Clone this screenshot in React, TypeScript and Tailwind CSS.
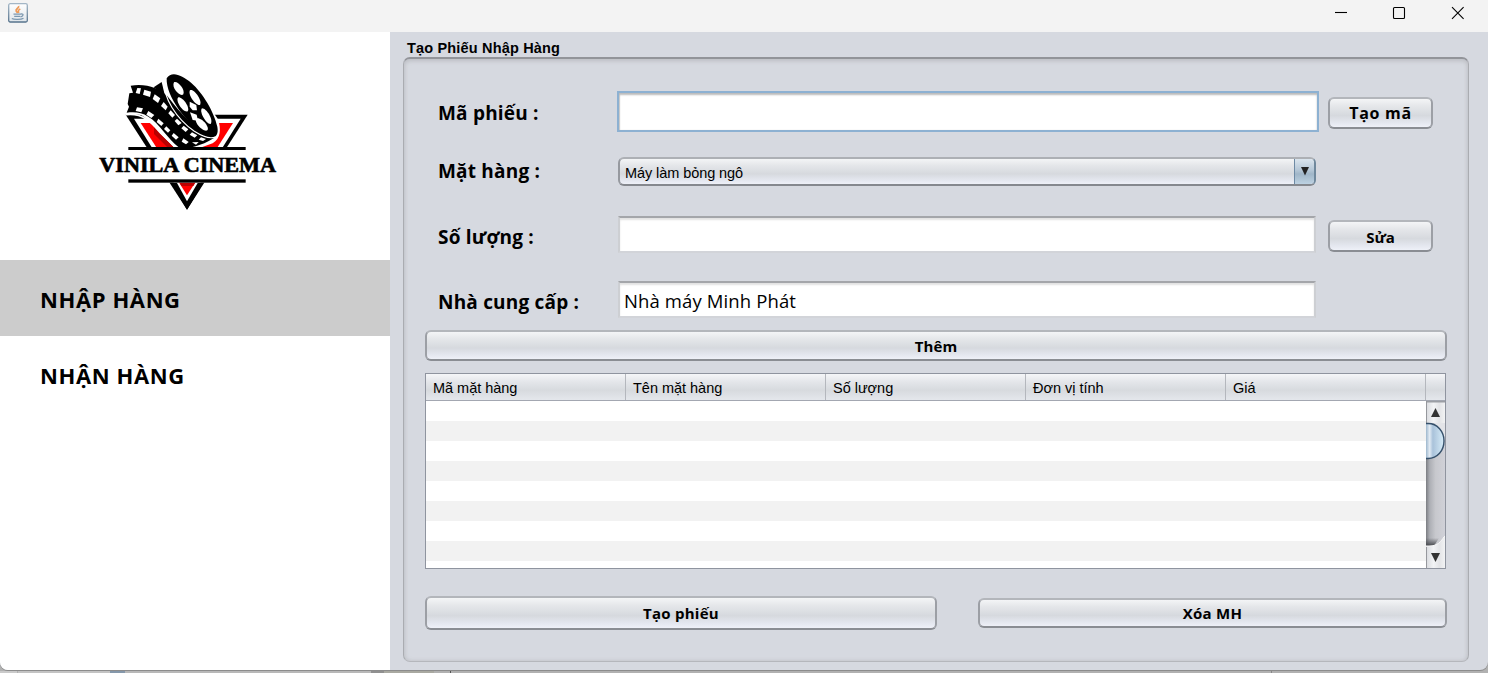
import React from "react";

const SANS = "font-['Open_Sans','Noto_Sans',sans-serif]";
const ARIAL = "font-['Liberation_Sans',Arial,sans-serif]";

function Logo() {
  return (
    <svg viewBox="0 0 660 480" className="ml-[80px] h-[160px] w-[220px]">
      <path d="M137 164H503L321 449Z" fill="#000" />
      <path d="M162 176H482L321 432Z" fill="#fff" />
      <path d="M182 189H459L321 405Z" fill="#f00" />
      <path d="M222 200L290 262H262L222 222Z" fill="#b80000" />
      <rect x="130" y="262" width="390" height="106" fill="#fff" />
      <path d="M274 369H370L321 449Z" fill="#000" />
      <path d="M291 369H353L321 424Z" fill="#fff" />
      <path d="M298 369H345L321 406Z" fill="#f00" />
      <path d="M300 369H345L340 378H304Z" fill="#b00" />
      <path d="M138 155C190 155 212 185 245 224L282 262H365L398 250C422 236 424 208 414 178L360 100L262 80L150 70Z" fill="#fff" />
      <path d="M152 77C200 70 235 84 262 108C300 158 345 210 402 234L385 244C370 252 350 258 335 262L296 262C262 235 238 190 205 170C184 156 163 156 140 158L147 140L143 132L148 100L159 98Z" fill="#000" />
      <path d="M221 82L245 66L255 108Z" fill="#000" />
      <path d="M260 55C275 32 305 45 334 69C368 98 403 157 412 200C418 232 398 242 370 223C324 192 257 111 260 55Z" fill="#000" />
      <path d="M253 67C250 112 287 174 343 214C370 231 391 239 407 230" fill="none" stroke="#fff" strokeWidth="3.5" />
      <g fill="#fff">
        <path d="M282 67C293 62 316 88 310 103C300 112 273 83 282 67Z" />
        <path d="M330 91C342 85 368 122 360 135C348 139 322 104 330 91Z" />
        <path d="M295 112C310 112 331 144 323 154C310 160 284 122 295 112Z" />
        <path d="M329 125L349 135L351 151L338 151L329 140Z" />
        <path d="M366 145C380 145 401 180 392 192C380 195 356 155 366 145Z" />
        <path d="M330 157L350 164L354 182L338 180Z" />
        <path d="M350 175C367 172 390 203 382 211C369 218 338 184 350 175Z" />
      </g>
      <g fill="#fff">
        <path d="M172 84L183 85L179 102L167 99Z" />
        <path d="M193 89L213 95L210 111L189 104Z" />
        <path d="M224 103L241 115L234 129L218 117Z" />
        <path d="M251 126L263 140L257 151L243 138Z" />
        <path d="M272 151L285 165L277 173L265 160Z" />
        <path d="M291 176L305 189L295 196L284 183Z" />
        <path d="M311 197L325 208L317 216L304 205Z" />
        <path d="M336 217L352 226L344 233L329 224Z" />
        <path d="M363 232L378 237L369 243L356 239Z" />
        <path d="M171 142L189 145L184 157L167 153Z" />
        <path d="M205 153L223 165L214 174L199 164Z" />
        <path d="M235 176L251 190L244 198L230 186Z" />
        <path d="M259 199L271 211L264 218L252 207Z" />
        <path d="M281 219L296 232L288 239L275 227Z" />
        <path d="M310 235L326 246L318 253L305 245Z" />
        <path d="M336 247L356 246L348 254Z" />
      </g>
      <path d="M138 164C190 158 215 188 240 217L288 264" fill="none" stroke="#fff" strokeWidth="5" />
      <rect x="145" y="261" width="352" height="9" />
      <rect x="145" y="358" width="352" height="10" />
      <text
        x="58"
        y="336"
        textLength="530"
        lengthAdjust="spacingAndGlyphs"
        className="font-['Liberation_Serif',serif] text-[65px] font-bold"
        stroke="#000"
        strokeWidth="2"
      >
        VINILA CINEMA
      </text>
    </svg>
  );
}

function JavaIcon() {
  return (
    <svg viewBox="0 0 20 20" className="h-5 w-5">
      <defs>
        <linearGradient id="jb" x1="0" y1="0" x2="0" y2="1">
          <stop offset="0" stopColor="#a3b6c6" />
          <stop offset="1" stopColor="#56738c" />
        </linearGradient>
        <linearGradient id="jf" x1="0" y1="0" x2="0" y2="1">
          <stop offset="0" stopColor="#ffffff" />
          <stop offset="1" stopColor="#dfe5ea" />
        </linearGradient>
      </defs>
      <rect x="0.7" y="0.7" width="18.6" height="18.3" rx="1.5" fill="url(#jf)" stroke="url(#jb)" strokeWidth="1.3" />
      <path d="M10.5 3C11.500 5 7.200 6 8.200 8L9.700 10M12.300 6C9.700 7.200 10 8 10.800 9.800" fill="none" stroke="#ee9a58" strokeWidth="1.8" />
      <path d="M5.5 11.2H13.2M6.2 13.3H12.2M13 11C16.5 10.5 15 13.5 12.5 13.8M3.8 15.5C6 16.8 13 16.7 15.5 15.2" fill="none" stroke="#7c98b0" strokeWidth="1.3" />
    </svg>
  );
}

function NimbusButton({
  children,
  className,
  font = "text-[15px] tracking-[0.25px]",
}: {
  children: React.ReactNode;
  className: string;
  font?: string;
}) {
  return (
    <button
      className={`${SANS} ${font} flex items-center justify-center rounded-[6px] border-2 border-t-[#b3b6bb] border-r-[#9c9fa5] border-b-[#8a8d93] border-l-[#9c9fa5] bg-[linear-gradient(180deg,#f8f9fa_0%,#e5e7ea_28%,#d6d9de_58%,#e4e7ef_80%,#f3f5fc_100%)] bg-origin-border font-bold text-black ${className}`}
    >
      {children}
    </button>
  );
}

function Label({ children, className }: { children: React.ReactNode; className: string }) {
  return (
    <label
      className={`${SANS} shrink-0 whitespace-nowrap text-[19px] font-bold leading-6 tracking-[0.2px] ${className}`}
    >
      {children}
    </label>
  );
}

function Field({ value }: { value: string }) {
  return (
    <div
      className={`${SANS} flex h-[37px] w-[698px] items-center border-2 border-t-[#a4a6aa] border-r-[#cdcfd3] border-b-[#d2d4d9] border-l-[#cdcfd3] bg-white pt-[3px] pl-1 text-[18.5px] tracking-[0.12px] shadow-[inset_0_2px_2px_#e2e2e2]`}
    >
      {value}
    </div>
  );
}

const columns = ["Mã mặt hàng", "Tên mặt hàng", "Số lượng", "Đơn vị tính", "Giá"];

function Table() {
  return (
    <div className="mt-3 flex h-[196px] w-[1021px] flex-col border border-[#8f949f] bg-white">
      <div
        className={`${ARIAL} flex h-[27px] shrink-0 border-b border-[#a3a7b1] bg-[linear-gradient(180deg,#f5f6f8_0%,#e4e6ea_30%,#d7dade_62%,#e4e7ec_100%)] text-[14.5px] tracking-[-0.02px] text-black`}
      >
        {columns.map((c) => (
          <div key={c} className="flex w-[200px] items-center border-r border-[#b4b7bd] pt-[3px] pl-[7px]">
            {c}
          </div>
        ))}
      </div>
      <div className="flex min-h-0 grow">
        <div className="w-[1000px] bg-[repeating-linear-gradient(180deg,#fff_0px,#fff_20px,#f2f2f2_20px,#f2f2f2_40px)]" />
        <svg viewBox="0 0 19 167" className="h-[167px] w-[19px]">
          <defs>
            <linearGradient id="track">
              <stop offset="0" stopColor="#7b7d82" />
              <stop offset="0.2" stopColor="#adafb5" />
              <stop offset="0.5" stopColor="#c7c8cd" />
              <stop offset="1" stopColor="#d0d1d8" />
            </linearGradient>
            <linearGradient id="cap">
              <stop offset="0" stopColor="#d8dade" />
              <stop offset="0.4" stopColor="#f2f3f5" />
              <stop offset="0.7" stopColor="#e3e4e7" />
              <stop offset="1" stopColor="#f2f3f4" />
            </linearGradient>
            <linearGradient id="thumb">
              <stop offset="0" stopColor="#9db7cd" />
              <stop offset="0.2" stopColor="#e2ebf4" />
              <stop offset="0.38" stopColor="#a9c2da" />
              <stop offset="1" stopColor="#d8edf9" />
            </linearGradient>
            <linearGradient id="trackEnd" x1="0" y1="0" x2="0" y2="1">
              <stop offset="0" stopColor="#45474c" stopOpacity="0" />
              <stop offset="1" stopColor="#45474c" />
            </linearGradient>
          </defs>
          <rect width="19" height="167" fill="url(#track)" />
          <path d="M0 137H13L8 145H0Z" fill="url(#trackEnd)" />
          <path d="M0 0H19V22H0Z" fill="url(#cap)" />
          <path d="M8 22H19V36Z" fill="#e3e4e8" />
          <rect width="19" height="1.5" fill="#9b9ea4" />
          <path d="M19 135C16 137 15 145 3 145H0V167H19Z" fill="url(#cap)" />
          <path d="M19 135C16 137 15 145 3 145H0" fill="none" stroke="#f6f6f7" />
          <path d="M0.5 0V22M0.5 146V167" stroke="#96989d" />
          <path d="M0 22.500H2C11.500 22.500 18 30.500 18 40C18 49.500 11.500 57.500 2 57.500H0Z" fill="url(#thumb)" />
          <path d="M0 22.500H2C11.500 22.500 18 30.500 18 40C18 49.500 11.500 57.500 2 57.500H0" fill="none" stroke="#35506b" strokeWidth="1.4" />
          <path d="M5 16L9.5 7L14 16Z" fill="#333" />
          <path d="M5 152L9.5 161L14 152Z" fill="#333" />
        </svg>
      </div>
    </div>
  );
}

export default function App() {
  return (
    <div className="flex h-[673px] w-[1488px] flex-col overflow-hidden bg-[#b1b1b1] text-black">
      <div className="flex h-[670px] flex-col overflow-hidden rounded-b-lg bg-[#d6d9e0] shadow-[0_1px_0_#8c8c8c]">
        <header className="flex h-8 shrink-0 items-start justify-between bg-[#f3f3f3] pt-[3px] pl-2">
          <JavaIcon />
          <svg viewBox="0 0 160 22" className="h-[22px] w-[160px]" fill="none" stroke="#000" strokeWidth="1.1">
            <path d="M7 9.500H19" />
            <rect x="65.500" y="4.500" width="11" height="11" rx="1" />
            <path d="M124 4.200L135.600 15.800M135.600 4.200L124 15.800" />
          </svg>
        </header>
        <div className="flex min-h-0 grow">
          <aside className={`${SANS} w-[390px] shrink-0 bg-white`}>
            <div className="h-[228px] pt-[28px]">
              <Logo />
            </div>
            <div className="flex h-[76px] items-center bg-[#ccc] pt-[2px] pl-10 text-[22px] font-bold tracking-[0.6px]">NHẬP HÀNG</div>
            <div className="flex h-[76px] items-center pt-[2px] pl-10 text-[22px] font-bold tracking-[0.6px]">NHẬN HÀNG</div>
          </aside>
          <main className="flex grow flex-col pl-[13px]">
            <h1 className={`${ARIAL} h-[25px] shrink-0 pt-[7px] pl-1 text-[14.5px] font-bold leading-[18px] tracking-[0.17px]`}>
              Tạo Phiếu Nhập Hàng
            </h1>
            <section className="flex h-[605px] w-[1066px] flex-col rounded-[7px] border border-t-2 border-t-[#929499] border-r-[#aaacb1] border-b-[#b5b7bc] border-l-[#aaacb1] pl-[21px] shadow-[inset_0_2px_4px_#bfc1c7,inset_0_0_4px_#c2c4c9]">
              <div className="mt-[32px] flex h-[41px] items-center pl-[13px]">
                <Label className="w-[179px] pt-[2px]">Mã phiếu :</Label>
                <div className="h-[41px] w-[702px] border-2 border-[#8db1d2] bg-white shadow-[inset_0_2px_2px_#bbb,inset_1px_0_1px_#ccc]" />
                <NimbusButton font="text-[16px] tracking-[0.7px]" className="mt-[2px] ml-[9px] h-8 w-[105px] pt-px">
                  Tạo mã
                </NimbusButton>
              </div>
              <div className="mt-[25px] flex h-[29px] items-center pl-[13px]">
                <Label className="w-[180px] pb-px">Mặt hàng :</Label>
                <div
                  className={`${ARIAL} flex h-[29px] w-[698px] items-center overflow-hidden rounded-[6px] border-2 border-t-[#adb0b5] border-r-[#6f889c] border-b-[#85888e] border-l-[#96999f] bg-[linear-gradient(180deg,#f8f9fa_0%,#e5e7ea_28%,#d6d9de_58%,#e4e7ef_80%,#f3f5fc_100%)] bg-origin-border text-[14.5px] tracking-[-0.08px]`}
                >
                  <span className="grow pt-[4px] pl-[5px]">Máy làm bỏng ngô</span>
                  <span className="flex h-full w-5 items-center justify-center border-l border-[#6e8aa4] bg-[linear-gradient(180deg,#dbe5ee_0%,#b4c6d6_45%,#a0b6c8_60%,#bdd2e2_100%)]">
                    <svg viewBox="0 0 10 9" className="h-[9px] w-[10px]">
                      <path d="M1 0H9L5 8.500Z" fill="#222" />
                    </svg>
                  </span>
                </div>
              </div>
              <div className="mt-[29px] flex h-[38px] items-center pl-[13px]">
                <Label className="w-[180px] pt-[5px]">Số lượng :</Label>
                <Field value="" />
                <NimbusButton font="text-[15px]" className="mt-[4px] ml-[12px] h-8 w-[105px] pt-[2px]">
                  Sửa
                </NimbusButton>
              </div>
              <div className="mt-[27px] flex h-[38px] items-center pl-[13px]">
                <Label className="w-[180px] pt-[5px]">Nhà cung cấp :</Label>
                <Field value="Nhà máy Minh Phát" />
              </div>
              <NimbusButton font="text-[15px] tracking-[0.1px]" className="mt-3 h-[31px] w-[1022px] pt-[2px]">
                Thêm
              </NimbusButton>
              <Table />
              <div className="mt-[27px] flex h-[34px] items-center gap-[41px]">
                <NimbusButton className="h-[34px] w-[512px]">Tạo phiếu</NimbusButton>
                <NimbusButton className="h-[30px] w-[469px]">Xóa MH</NimbusButton>
              </div>
            </section>
          </main>
        </div>
      </div>
      <div className="mt-px flex h-[2px]">
        <div className="w-[17px] bg-[#cacaca]" />
        <div className="ml-px w-[92px] bg-[#c3c3c3]" />
        <div className="w-[15px] bg-[#8598ab]" />
        <div className="w-[246px] bg-[#b8b8b8]" />
        <div className="w-[13px] bg-[#909090]" />
        <div className="w-[50px] bg-[#a9a9a1]" />
        <div className="ml-[16px] w-px bg-[#555]" />
        <div className="ml-[820px] w-px bg-[#888]" />
      </div>
    </div>
  );
}
